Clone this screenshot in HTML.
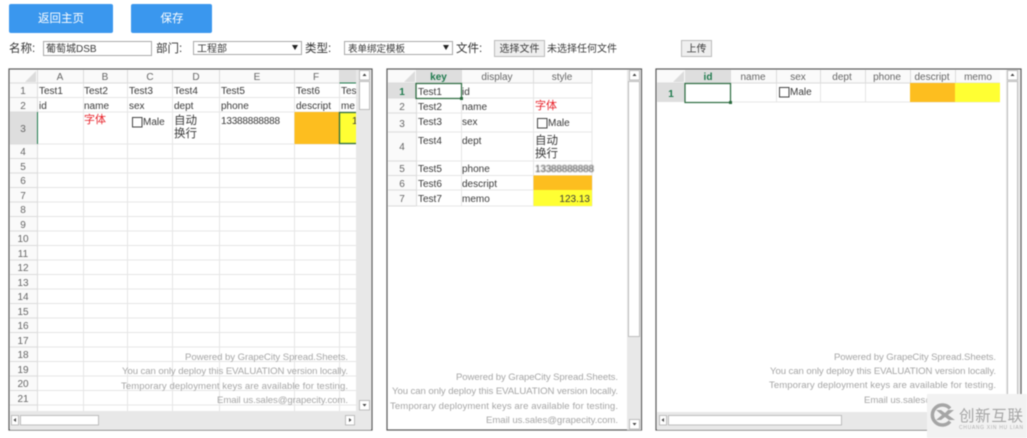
<!DOCTYPE html>
<html lang="zh"><head><meta charset="utf-8"><title>表单</title>
<style>
html,body{margin:0;padding:0;background:#fff;width:1027px;height:438px;overflow:hidden}
svg{display:block;filter:blur(.45px)}
text{font-family:"Liberation Sans","Noto Sans CJK SC",sans-serif;font-size:10px;fill:#3a3a3a}
.h{fill:#666;text-anchor:middle}
.n{fill:#666;text-anchor:middle}
.w{fill:#a6a6a6;text-anchor:end;font-size:9.6px}
.l{font-size:11.5px;fill:#333}
.b{fill:#fff;font-size:11.5px;text-anchor:middle}
.g{fill:#1f7a4d;font-weight:bold;text-anchor:middle}
.ln{stroke:#e6e6e6;stroke-width:1;fill:none}
.hl{stroke:#dcdcdc;stroke-width:1;fill:none}
.box{fill:#fff;stroke:#5a5a5a;stroke-width:1.2}
.sb{fill:#e8e8e8}
.th{fill:#fff;stroke:#bdbdbd;stroke-width:1}
.ar{fill:#444}
</style></head><body>
<svg width="1027" height="438" viewBox="0 0 1027 438" xmlns="http://www.w3.org/2000/svg">
<!-- top bar -->
<rect x="9" y="4" width="104" height="29" rx="2" fill="#3a97ee"/>
<text class="b" x="61" y="22">返回主页</text>
<rect x="131" y="4" width="81" height="29" rx="2" fill="#3a97ee"/>
<text class="b" x="172" y="22">保存</text>
<text class="l" x="9" y="52">名称:</text>
<rect x="43.500" y="41.500" width="108" height="14" fill="#fff" stroke="#aaa"/>
<text x="46" y="52">葡萄城DSB</text>
<text class="l" x="156" y="52">部门:</text>
<rect x="193.500" y="41.500" width="108" height="13" fill="#fff" stroke="#aaa"/>
<text x="197" y="52">工程部</text>
<path d="M292 45h6l-3 5z" fill="#222"/>
<text class="l" x="305" y="52">类型:</text>
<rect x="344.500" y="41.500" width="108" height="13" fill="#fff" stroke="#aaa"/>
<text x="348" y="52" style="font-size:9.500px">表单绑定模板</text>
<path d="M443 45h6l-3 5z" fill="#222"/>
<text class="l" x="456" y="52">文件:</text>
<rect x="494.500" y="40.500" width="50" height="16" fill="#efefef" stroke="#bbb"/>
<text x="519.500" y="52" text-anchor="middle">选择文件</text>
<text x="547" y="52">未选择任何文件</text>
<rect x="681.500" y="40.500" width="30" height="16" fill="#efefef" stroke="#bbb"/>
<text x="696.500" y="52" text-anchor="middle">上传</text>

<!-- SHEET 1 -->
<rect class="box" x="9" y="69" width="363" height="361"/>
<rect x="10" y="70" width="346" height="13" fill="#fafafa"/>
<rect x="10" y="83" width="27" height="328" fill="#fafafa"/>
<path d="M36 71v11h-11z" fill="#dcdcdc"/>
<rect x="339" y="70" width="17" height="13" fill="#dedede"/>
<rect x="10" y="112" width="27" height="32" fill="#dedede"/>
<path class="ln" d="M37 97.500H356M37 112H356M37 144H356M37 158.500H356M37 173H356M37 187.500H356M37 202H356M37 216.500H356M37 231H356M37 245.500H356M37 260H356M37 274.500H356M37 289H356M37 303.500H356M37 318H356M37 332.500H356M37 347H356M37 361.500H356M37 376H356M37 390.500H356M37 405H356"/>
<path class="ln" d="M83.500 83V411M127.500 83V411M172.500 83V411M219.500 83V411M294.500 83V411M339.500 83V411"/>
<path class="hl" d="M10 83H356M10 97.500H37M10 112H37M10 144H37M10 158.500H37M10 173H37M10 187.500H37M10 202H37M10 216.500H37M10 231H37M10 245.500H37M10 260H37M10 274.500H37M10 289H37M10 303.500H37M10 318H37M10 332.500H37M10 347H37M10 361.500H37M10 376H37M10 390.500H37M10 405H37M37.500 70V411M83.500 70V83M127.500 70V83M172.500 70V83M219.500 70V83M294.500 70V83M339.500 70V83"/>
<rect x="294.500" y="112" width="45" height="32" fill="#fdbe1f"/>
<rect x="339.500" y="112" width="16.500" height="32" fill="#ffff33"/>
<path d="M37.500 112V144M339.500 83H356" stroke="#1f7a4d" fill="none"/>
<path d="M356 112.500H339.500V143.500H356" stroke="#2b6b3f" stroke-width="1.300" fill="none"/>
<text class="h" x="60" y="80">A</text><text class="h" x="105" y="80">B</text><text class="h" x="150" y="80">C</text><text class="h" x="196" y="80">D</text><text class="h" x="257" y="80">E</text><text class="h" x="316" y="80">F</text>
<text class="n" x="23" y="94">1</text><text class="n" x="23" y="109">2</text><text class="n" x="23" y="132" fill="#1f7a4d">3</text><text class="n" x="23" y="155">4</text><text class="n" x="23" y="170">5</text><text class="n" x="23" y="184">6</text><text class="n" x="23" y="199">7</text><text class="n" x="23" y="213">8</text><text class="n" x="23" y="228">9</text><text class="n" x="23" y="242">10</text><text class="n" x="23" y="257">11</text><text class="n" x="23" y="271">12</text><text class="n" x="23" y="286">13</text><text class="n" x="23" y="300">14</text><text class="n" x="23" y="315">15</text><text class="n" x="23" y="329">16</text><text class="n" x="23" y="344">17</text><text class="n" x="23" y="358">18</text><text class="n" x="23" y="373">19</text><text class="n" x="23" y="387">20</text><text class="n" x="23" y="402">21</text>
<text x="39" y="94">Test1</text><text x="84" y="94">Test2</text><text x="129" y="94">Test3</text><text x="174" y="94">Test4</text><text x="221" y="94">Test5</text><text x="296" y="94">Test6</text><text x="341" y="94">Tes</text>
<text x="39" y="109">id</text><text x="84" y="109">name</text><text x="129" y="109">sex</text><text x="174" y="109">dept</text><text x="221" y="109">phone</text><text x="296" y="109">descript</text><text x="341" y="109">me</text>
<text x="84" y="123" style="fill:#e8222a;font-size:11px">字体</text>
<rect x="132.500" y="117.500" width="9.500" height="9.500" fill="#fff" stroke="#444"/><text x="143" y="125">Male</text>
<text x="174" y="124" style="font-size:11.500px">自动</text><text x="174" y="137" style="font-size:11.500px">换行</text>
<text x="221" y="124" textLength="59">13388888888</text>
<text x="352" y="124">1</text>
<text class="w" x="348" y="360" textLength="163">Powered by GrapeCity Spread.Sheets.</text>
<text class="w" x="348" y="374" textLength="226">You can only deploy this EVALUATION version locally.</text>
<text class="w" x="348" y="389" textLength="227">Temporary deployment keys are available for testing.</text>
<text class="w" x="348" y="403" textLength="131">Email us.sales@grapecity.com.</text>
<rect class="sb" x="356" y="70" width="15" height="341"/>
<rect class="th" x="359.500" y="70.500" width="10" height="9.500"/><path class="ar" d="M362.500 76h4l-2-2.500z"/>
<rect class="th" x="359.500" y="81.500" width="10" height="28"/>
<rect class="th" x="359.500" y="400.500" width="10" height="9.500"/><path class="ar" d="M362.500 404h4l-2 2.500z"/>
<rect class="sb" x="10" y="411" width="361" height="19"/>
<rect class="th" x="11.500" y="415.500" width="7" height="9.500"/><path class="ar" d="M16 418v4l-2.500-2z"/>
<rect class="th" x="20.500" y="415.500" width="78" height="9.500"/>
<rect class="th" x="345.500" y="415.500" width="9" height="9.500"/><path class="ar" d="M349 418v4l2.500-2z"/>

<!-- SHEET 2 -->
<rect class="box" x="387" y="69" width="254.500" height="361"/>
<rect x="388" y="70" width="204" height="13" fill="#fafafa"/>
<rect x="388" y="83" width="28" height="123" fill="#fafafa"/>
<path d="M415 71v11h-11z" fill="#dcdcdc"/>
<rect x="416" y="70" width="45" height="13" fill="#dedede"/>
<rect x="388" y="83" width="28" height="15" fill="#dedede"/>
<path class="ln" d="M416 98H592M416 113H592M416 132H592M416 161H592M416 175.500H592M416 190H592M416 206H592M461.500 83V206M533.500 83V206M592 83V206"/>
<path class="hl" d="M388 83H592M388 98H416M388 113H416M388 132H416M388 161H416M388 175.500H416M388 190H416M388 206H416M416.500 70V206M461.500 70V83M533.500 70V83M592 70V83"/>
<rect x="533.500" y="175.500" width="58.500" height="14.500" fill="#fdbe1f"/>
<rect x="533.500" y="190" width="58.500" height="16" fill="#ffff33"/>
<rect x="416" y="83.500" width="45.500" height="15" fill="none" stroke="#2b6b3f" stroke-width="1.200"/>
<rect x="460" y="97" width="3" height="3" fill="#2b6b3f"/>
<text class="g" x="438.500" y="80">key</text><text class="h" x="497" y="80">display</text><text class="h" x="562" y="80">style</text>
<text class="n" x="402" y="95" style="fill:#1f7a4d;font-weight:bold">1</text><text class="n" x="402" y="110">2</text><text class="n" x="402" y="127">3</text><text class="n" x="402" y="150">4</text><text class="n" x="402" y="172">5</text><text class="n" x="402" y="187">6</text><text class="n" x="402" y="202">7</text>
<text x="418" y="95">Test1</text><text x="418" y="110">Test2</text><text x="418" y="125">Test3</text><text x="418" y="144">Test4</text><text x="418" y="172">Test5</text><text x="418" y="187">Test6</text><text x="418" y="202">Test7</text>
<text x="462" y="95">id</text><text x="462" y="110">name</text><text x="462" y="125">sex</text><text x="462" y="144">dept</text><text x="462" y="172">phone</text><text x="462" y="187">descript</text><text x="462" y="202">memo</text>
<text x="535" y="109" style="fill:#e8222a;font-size:11px">字体</text>
<rect x="537.500" y="118.500" width="9.500" height="9.500" fill="#fff" stroke="#444"/><text x="548" y="126">Male</text>
<text x="535" y="144" style="font-size:11.500px">自动</text><text x="535" y="157" style="font-size:11.500px">换行</text>
<svg x="534" y="160" width="58" height="16"><text x="1" y="12" textLength="59">13388888888</text></svg>
<text x="590" y="202" text-anchor="end">123.13</text>
<text class="w" x="618" y="380" textLength="162">Powered by GrapeCity Spread.Sheets.</text>
<text class="w" x="618" y="394" textLength="226">You can only deploy this EVALUATION version locally.</text>
<text class="w" x="618" y="409" textLength="228">Temporary deployment keys are available for testing.</text>
<text class="w" x="618" y="423" textLength="132">Email us.sales@grapecity.com.</text>
<rect class="sb" x="627" y="70" width="14" height="360"/>
<rect class="th" x="629.500" y="70.500" width="10" height="9.500"/><path class="ar" d="M632.500 76h4l-2-2.500z"/>
<rect class="th" x="628.500" y="81.500" width="11" height="255"/>
<rect class="th" x="629.500" y="419.500" width="10" height="9.500"/><path class="ar" d="M632.500 423h4l-2 2.500z"/>

<!-- SHEET 3 -->
<rect class="box" x="656" y="69" width="365" height="361"/>
<rect x="657" y="70" width="343" height="13" fill="#fafafa"/>
<path d="M684 71v11h-11z" fill="#dcdcdc"/>
<rect x="685" y="70" width="45" height="13" fill="#dedede"/>
<rect x="657" y="83" width="28" height="19" fill="#dedede"/>
<path class="ln" d="M685 102H1000M730.500 83V102M776.500 83V102M820.500 83V102M865.500 83V102M910.500 83V102M955.500 83V102"/>
<path class="hl" d="M657 83H1000M730.500 70V83M776.500 70V83M820.500 70V83M865.500 70V83M910.500 70V83M955.500 70V83"/>
<rect x="910" y="83" width="45" height="19" fill="#fdbe1f"/>
<rect x="955" y="83" width="45" height="19" fill="#ffff33"/>
<rect x="685" y="83.500" width="45.500" height="19" fill="#fff" stroke="#2b6b3f" stroke-width="1.200"/>
<rect x="729" y="101" width="3" height="3" fill="#2b6b3f"/>
<text class="g" x="708" y="80">id</text><text class="h" x="753" y="80">name</text><text class="h" x="798" y="80">sex</text><text class="h" x="842" y="80">dept</text><text class="h" x="887" y="80">phone</text><text class="h" x="932" y="80">descript</text><text class="h" x="978" y="80">memo</text>
<text class="n" x="671" y="97" style="fill:#1f7a4d;font-weight:bold">1</text>
<rect x="779.500" y="87.500" width="9.500" height="9.500" fill="#fff" stroke="#444"/><text x="790" y="95">Male</text>
<text class="w" x="996" y="360" textLength="162">Powered by GrapeCity Spread.Sheets.</text>
<text class="w" x="996" y="374" textLength="226">You can only deploy this EVALUATION version locally.</text>
<text class="w" x="996" y="388" textLength="227">Temporary deployment keys are available for testing.</text>
<text class="w" x="996" y="403" textLength="132">Email us.sales@grapecity.com.</text>
<rect class="sb" x="1006" y="70" width="14" height="342"/>
<rect class="th" x="1007.500" y="70.500" width="10" height="9.500"/><path class="ar" d="M1010.500 76h4l-2-2.500z"/>
<rect class="th" x="1007.500" y="81.500" width="10" height="320"/>
<rect class="sb" x="657" y="412" width="363" height="18"/>
<rect class="th" x="659.500" y="415.500" width="7" height="9.500"/><path class="ar" d="M664 418v4l-2.500-2z"/>
<rect class="th" x="668.500" y="415.500" width="173" height="9.500"/>

<!-- corner logo -->
<rect x="927" y="394" width="100" height="44" fill="#f2f2f2"/>
<path d="M950 408.500a10 10 0 1 0 0 13" fill="none" stroke="#a5a5a5" stroke-width="3.500"/>
<path d="M936 410l6 5-6 5h5l4-3 4 3h6l-7-5 6-5h-6l-3 3-4-3z" fill="#a5a5a5"/>
<text x="959" y="421" style="font-size:15.500px;fill:#a5a5a5" textLength="64">创新互联</text>
<text x="959" y="429" style="font-size:5px;fill:#b0b0b0" textLength="64">CHUANG XIN HU LIAN</text>
</svg>
</body></html>
